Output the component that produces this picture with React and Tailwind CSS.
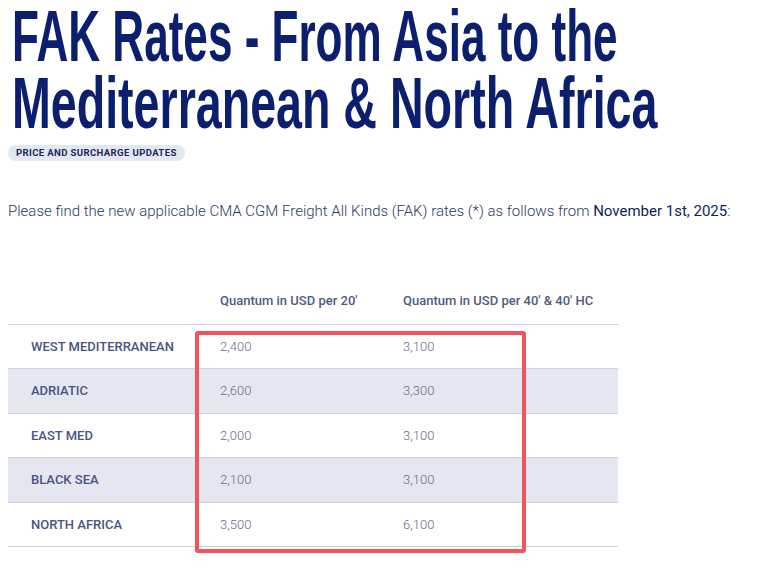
import React from 'react';

const rows = [
  { zone: 'WEST MEDITERRANEAN', twenty: '2,400', forty: '3,100' },
  { zone: 'ADRIATIC', twenty: '2,600', forty: '3,300' },
  { zone: 'EAST MED', twenty: '2,000', forty: '3,100' },
  { zone: 'BLACK SEA', twenty: '2,100', forty: '3,100' },
  { zone: 'NORTH AFRICA', twenty: '3,500', forty: '6,100' },
];

export default function App() {
  return (
    <div className="min-h-[574px] overflow-hidden bg-white px-2 font-['Roboto',sans-serif]">
      <h1 className="whitespace-nowrap pl-1 pt-[3px] font-['Liberation_Sans_Narrow','Liberation_Sans',sans-serif] text-[72px] font-bold leading-[67px] text-[#0c1f6e]">
        <span className="inline-block origin-left scale-x-[0.612]">FAK Rates - From Asia to the</span>
        <br />
        <span className="inline-block origin-left scale-x-[0.647]">Mediterranean &amp; North Africa</span>
      </h1>

      <div className="mt-[8px] inline-block rounded-full bg-[#e3e7f0] px-2 py-[2px] text-[9.6px] font-bold uppercase leading-[12px] tracking-[0.35px] text-[#1b2a5c]">
        Price and surcharge updates
      </div>

      <p className="mt-[37px] text-[15px] font-light text-[#2d3a66]">
        Please find the new applicable CMA CGM Freight All Kinds (FAK) rates (*) as follows from{' '}
        <span className="font-normal text-[#0c1f5e]">November 1st, 2025</span>:
      </p>

      <div className="relative mt-[56px] w-[610px]">
        <div className="grid h-[45px] grid-cols-[212px_183px_1fr] items-center text-[13px] font-medium text-[#505a80]">
          <div />
          <div>Quantum in USD per 20'</div>
          <div>Quantum in USD per 40' &amp; 40' HC</div>
        </div>
        <div className="border-t border-[#cfd3dc]">
          {rows.map((r, i) => (
            <div
              key={r.zone}
              className={`grid h-[44.6px] grid-cols-[212px_183px_1fr] items-center border-b border-[#cfd3dc] text-[13px] ${
                i % 2 === 1 ? 'bg-[#e4e7ef]' : 'bg-white'
              }`}
            >
              <div className="pl-[23px] font-medium text-[#4a5484]">{r.zone}</div>
              <div className="font-light text-[#696d8b]">{r.twenty}</div>
              <div className="font-light text-[#696d8b]">{r.forty}</div>
            </div>
          ))}
        </div>
        <div className="pointer-events-none absolute left-[187px] top-[52px] h-[222px] w-[331px] rounded-[3px] border-[4px] border-[#f2545b]" />
      </div>
    </div>
  );
}
